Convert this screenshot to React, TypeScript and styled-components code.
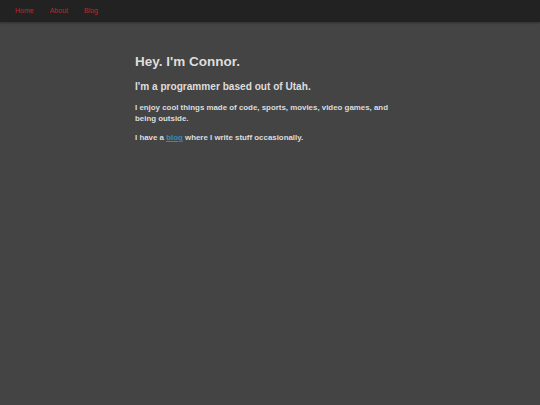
import styled, { createGlobalStyle } from 'styled-components';

const GlobalStyle = createGlobalStyle`
  html, body {
    margin: 0;
    padding: 0;
    height: 100%;
    background: #444444;
  }
  body {
    font-family: 'Liberation Sans', Arial, sans-serif;
    color: #dddddd;
  }
`;

const Header = styled.header`
  height: 22px;
  background: #222222;
  display: flex;
  align-items: center;
  padding: 0 15px;
  box-shadow: 0 1px 2px rgba(0, 0, 0, 0.3);
`;

const Nav = styled.nav`
  display: flex;
  gap: 16px;
  margin-top: -1px;
`;

const NavLink = styled.a`
  color: #c0262a;
  font-size: 7px;
  text-decoration: none;
`;

const Main = styled.main`
  width: 270px;
  margin: 0 auto;
  padding-top: 32px;
`;

const Title = styled.h1`
  font-size: 13.5px;
  font-weight: bold;
  margin: 0 0 12px;
`;

const Subtitle = styled.h2`
  font-size: 10.1px;
  font-weight: bold;
  margin: 0 0 10px;
`;

const Paragraph = styled.p`
  font-size: 7.9px;
  font-weight: bold;
  line-height: 11px;
  margin: 0 0 8px;
`;

const Link = styled.a`
  color: #2b8dbd;
`;

export default function App() {
  return (
    <>
      <GlobalStyle />
      <Header>
        <Nav>
          <NavLink href="#">Home</NavLink>
          <NavLink href="#">About</NavLink>
          <NavLink href="#">Blog</NavLink>
        </Nav>
      </Header>
      <Main>
        <Title>Hey. I'm Connor.</Title>
        <Subtitle>I'm a programmer based out of Utah.</Subtitle>
        <Paragraph>
          I enjoy cool things made of code, sports, movies, video games, and being outside.
        </Paragraph>
        <Paragraph>
          I have a <Link href="#">blog</Link> where I write stuff occasionally.
        </Paragraph>
      </Main>
    </>
  );
}
